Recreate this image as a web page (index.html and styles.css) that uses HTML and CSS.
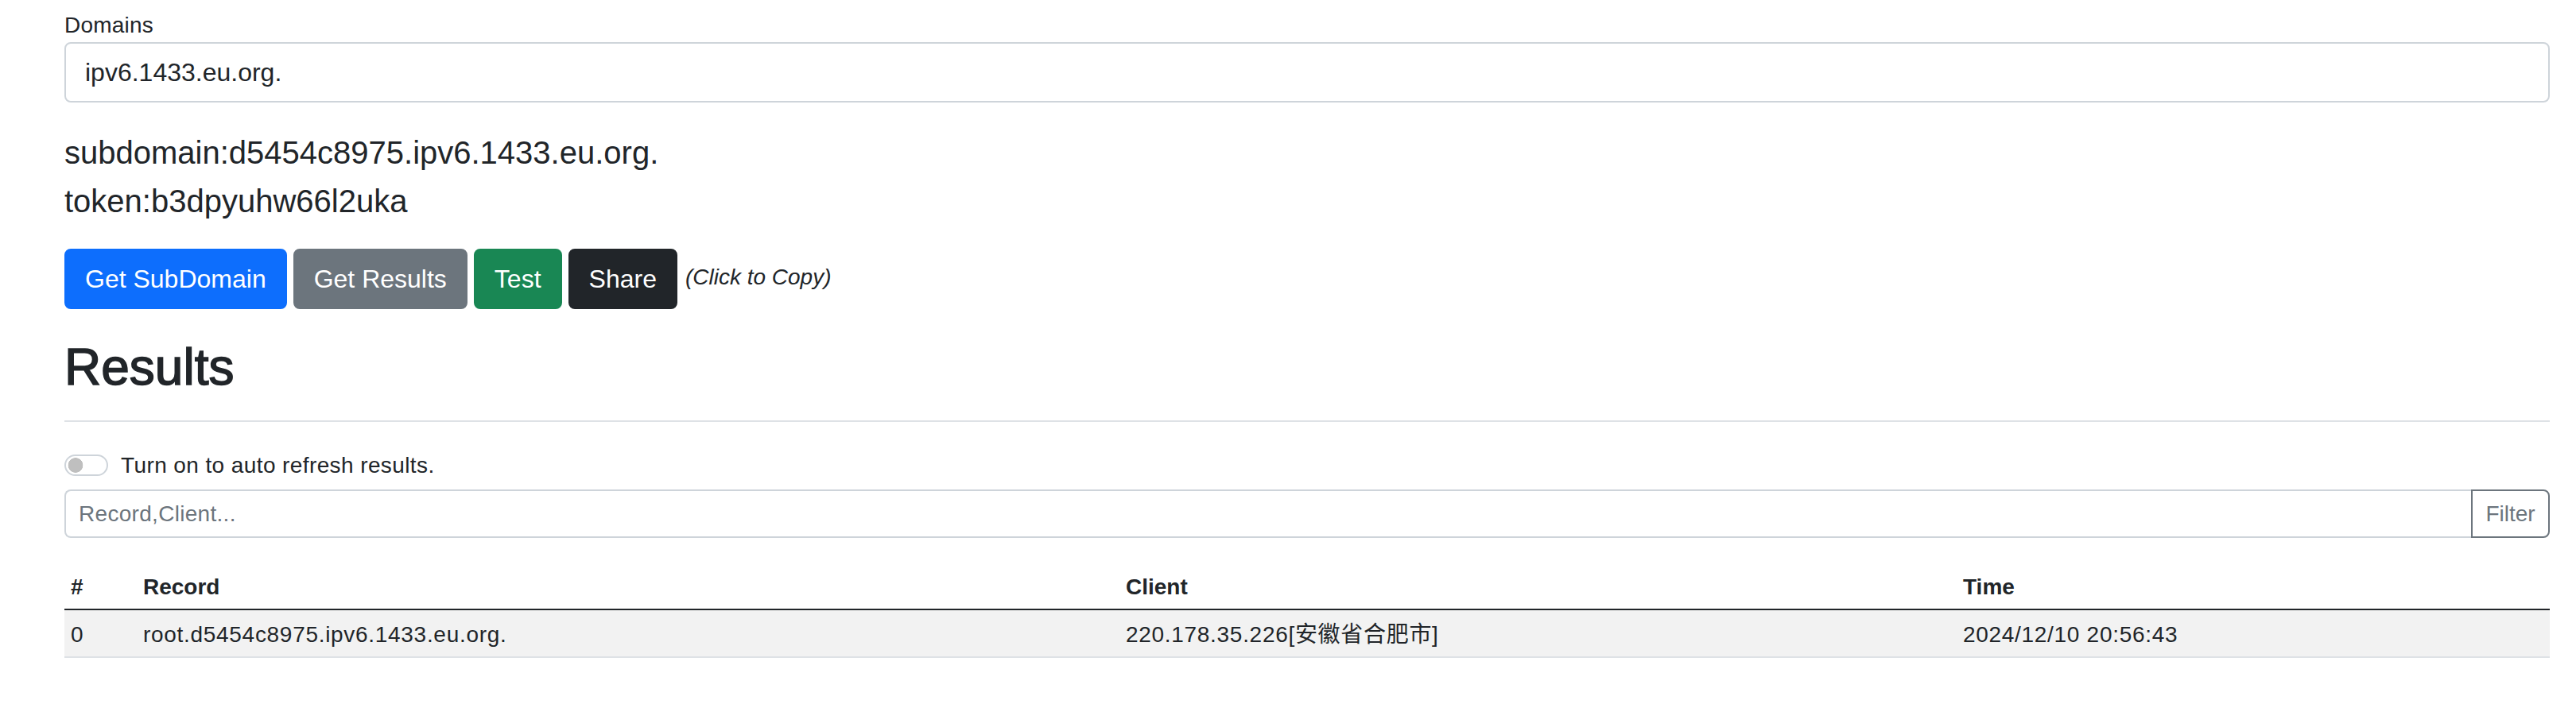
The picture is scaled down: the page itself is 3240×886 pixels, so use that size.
FILE: index.html
```html
<!DOCTYPE html>
<html lang="en">
<head>
<meta charset="utf-8">
<title>DNS Log</title>
<link rel="stylesheet" href="styles.css">
</head>
<body>
<main class="page">
  <label class="field-label" for="domain">Domains</label>
  <input class="domain-input" id="domain" type="text" value="ipv6.1433.eu.org.">

  <div class="info">
    <div>subdomain:d5454c8975.ipv6.1433.eu.org.</div>
    <div>token:b3dpyuhw66l2uka</div>
  </div>

  <div class="actions">
    <button class="btn btn-primary">Get SubDomain</button>
    <button class="btn btn-secondary">Get Results</button>
    <button class="btn btn-success">Test</button>
    <button class="btn btn-dark">Share</button>
    <i class="copy-hint">(Click to Copy)</i>
  </div>

  <h2 class="results-title">Results</h2>
  <hr class="divider">

  <div class="switch-row">
    <input class="switch" type="checkbox" id="auto">
    <label class="switch-label" for="auto">Turn on to auto refresh results.</label>
  </div>

  <div class="filter-group">
    <input class="filter-input" type="text" placeholder="Record,Client...">
    <button class="filter-btn">Filter</button>
  </div>

  <table class="results-table">
    <colgroup>
      <col class="col-num">
      <col class="col-record">
      <col class="col-client">
      <col class="col-time">
    </colgroup>
    <thead>
      <tr><th>#</th><th>Record</th><th>Client</th><th>Time</th></tr>
    </thead>
    <tbody>
      <tr><td>0</td><td>root.d5454c8975.ipv6.1433.eu.org.</td><td>220.178.35.226[安徽省合肥市]</td><td>2024/12/10 20:56:43</td></tr>
    </tbody>
  </table>
</main>
</body>
</html>
```

FILE: styles.css
```css
* { box-sizing: border-box; }

html, body {
  margin: 0;
  background: #ffffff;
}

body {
  font-family: "Liberation Sans", Arial, "Noto Sans CJK SC", sans-serif;
  color: #212529;
}

.page {
  padding: 11px 33px 0 81px;
}

.field-label {
  display: block;
  font-size: 28px;
  line-height: 42px;
  letter-spacing: 0.2px;
}

.domain-input {
  display: block;
  width: 100%;
  height: 76px;
  margin: 0 0 32px;
  padding: 0 24px;
  font-family: inherit;
  font-size: 32px;
  color: #212529;
  background: #fff;
  border: 2px solid #ced4da;
  border-radius: 8px;
  outline: none;
}

.info {
  font-size: 40px;
  line-height: 60px;
  margin-bottom: 32px;
}

.info div {
  padding-top: 1px;
}

.actions {
  display: flex;
  align-items: center;
  gap: 8px;
  margin-top: -2px;
}

.btn {
  font-family: inherit;
  font-size: 32px;
  line-height: 48px;
  padding: 12px 24px;
  border: 2px solid transparent;
  border-radius: 8px;
  color: #fff;
  cursor: pointer;
}

.btn-primary { background: #0d6efd; border-color: #0d6efd; }
.btn-secondary { background: #6c757d; border-color: #6c757d; }
.btn-success { background: #198754; border-color: #198754; }
.btn-dark { background: #212529; border-color: #212529; }

.copy-hint {
  font-size: 28px;
  line-height: 42px;
  margin-left: 2px;
  margin-top: -4px;
}

.results-title {
  margin: 35px 0 0;
  font-size: 64px;
  line-height: 77px;
  font-weight: 500;
  -webkit-text-stroke: 1.5px #212529;
}

.divider {
  margin: 28px 0 33px;
  border: 0;
  border-top: 2px solid #dee2e6;
}

.switch-row {
  display: flex;
  align-items: center;
  height: 42px;
  margin-bottom: 10px;
  font-size: 28px;
  line-height: 42px;
}

.switch {
  -webkit-appearance: none;
  appearance: none;
  width: 55px;
  height: 27px;
  margin: 0 16px 0 0;
  border: 2px solid #ced4da;
  border-radius: 14px;
  background: #fff radial-gradient(circle at 12px 50%, #bfbfbf 0 9px, transparent 9.6px);
}

.switch-label {
  letter-spacing: 0.4px;
  padding-top: 2px;
}

.filter-group {
  display: flex;
  height: 61px;
  margin-bottom: 31px;
}

.filter-input {
  flex: 1;
  min-width: 0;
  height: 100%;
  padding: 0 16px;
  font-family: inherit;
  font-size: 28px;
  letter-spacing: 0.3px;
  color: #212529;
  border: 2px solid #ced4da;
  border-right: 0;
  border-radius: 8px 0 0 8px;
  outline: none;
}

.filter-input::placeholder {
  color: #6c757d;
  opacity: 1;
}

.filter-btn {
  width: 99px;
  height: 100%;
  padding: 0 16px;
  font-family: inherit;
  font-size: 28px;
  color: #6c757d;
  background: #fff;
  border: 2px solid #6c757d;
  border-radius: 0 8px 8px 0;
}

.results-table {
  width: 100%;
  table-layout: fixed;
  border-collapse: collapse;
  font-size: 28px;
  line-height: 42px;
}

.col-num { width: 91px; }
.col-record { width: 1236px; }
.col-client { width: 1053px; }
.col-time { width: 746px; }

.results-table th,
.results-table td {
  padding: 10px 8px 6px;
  text-align: left;
  vertical-align: top;
}

.results-table th {
  font-weight: 700;
  border-bottom: 2px solid #212529;
}

.results-table td {
  letter-spacing: 0.7px;
  background: #f2f2f2;
  border-bottom: 2px solid #dee2e6;
}
```
